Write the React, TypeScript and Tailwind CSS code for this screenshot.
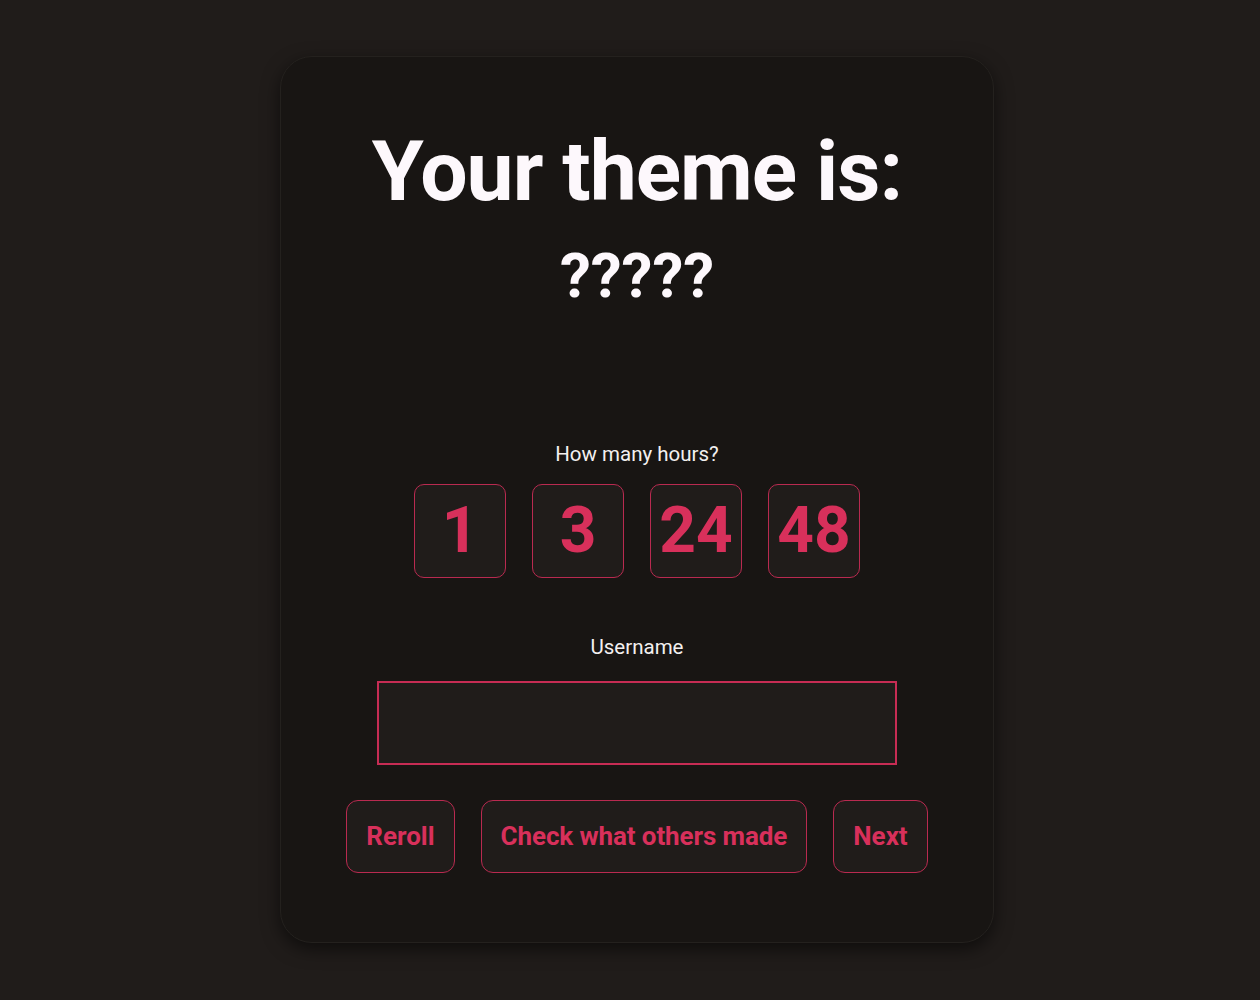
export default function App() {
  const hours = [1, 3, 24, 48];

  return (
    <div className="min-h-screen w-full bg-[#201c1a] flex justify-center pt-[56px] pl-[14px] font-['Roboto',sans-serif]">
      <div className="w-[714px] h-[887px] rounded-[32px] bg-[#181513] border border-[#24211e] shadow-[0_6px_18px_rgba(0,0,0,0.55)] flex flex-col items-center">
        {/* Title */}
        <h1 className="mt-[67px] text-[84px] leading-[96px] font-bold text-[#fdf8fc] tracking-[-1px]">
          Your theme is:
        </h1>
        <div className="mt-[20px] text-[62px] leading-[72px] font-bold text-[#fdf8fc]">?????</div>

        {/* Hours */}
        <div className="mt-[130px] text-[20.5px] leading-[24px] text-[#f3f0f0]">How many hours?</div>
        <div className="mt-[18px] flex gap-[26px]">
          {hours.map((h) => (
            <button
              key={h}
              className="w-[92px] h-[94px] rounded-[10px] border border-[#b92a50] bg-[#201c1a] text-[64px] font-bold text-[#d8305b] flex items-center justify-center"
            >
              {h}
            </button>
          ))}
        </div>

        {/* Username */}
        <label className="mt-[57px] text-[20.5px] leading-[24px] text-[#f3f0f0]">Username</label>
        <input
          type="text"
          className="mt-[22px] w-[520px] h-[84px] border-2 border-[#c72c54] bg-[#201c1a] outline-none text-white px-3"
        />

        {/* Actions */}
        <div className="mt-[35px] flex gap-[26px]">
          <button className="h-[73px] px-[19px] rounded-[12px] border border-[#b92a50] bg-[#201c1a] text-[26px] font-bold text-[#d8305b]">
            Reroll
          </button>
          <button className="h-[73px] px-[19px] rounded-[12px] border border-[#b92a50] bg-[#201c1a] text-[26px] font-bold text-[#d8305b] tracking-[-0.1px]">
            Check what others made
          </button>
          <button className="h-[73px] px-[19px] rounded-[12px] border border-[#b92a50] bg-[#201c1a] text-[26px] font-bold text-[#d8305b]">
            Next
          </button>
        </div>
      </div>
    </div>
  );
}
